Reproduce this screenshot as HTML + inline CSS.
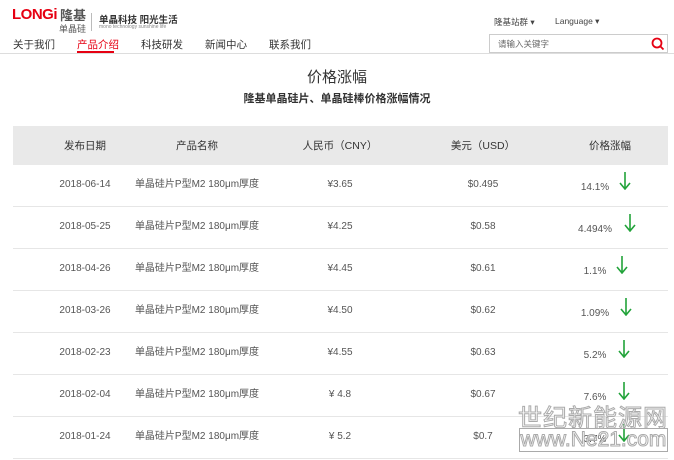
<!DOCTYPE html>
<html><head><meta charset="utf-8"><style>
*{margin:0;padding:0;box-sizing:border-box}
body{width:674px;height:456px;overflow:hidden;background:#fff;font-family:"Liberation Sans","Noto Sans CJK SC",sans-serif;color:#333;position:relative}
.a{position:absolute;white-space:nowrap}
.row{position:absolute;left:13px;width:655px;height:42px;border-bottom:1px solid #e6e6e6;font-size:10px;color:#555}
.row span{position:absolute;top:0;line-height:40px;transform:translateX(-50%)}
.arr{position:absolute;width:12px;height:18px}
</style></head><body>
<div class="a" style="left:12px;top:6px;font-size:15px;font-weight:bold;color:#e60012;letter-spacing:-0.5px">LONGi</div>
<div class="a" style="left:60px;top:5px;font-size:13px;font-weight:bold;color:#555">隆基</div>
<div class="a" style="left:59px;top:22px;font-size:9px;color:#555">单晶硅</div>
<div class="a" style="left:91px;top:13px;width:1px;height:18px;background:#bbb"></div>
<div class="a" style="left:99px;top:12px;font-size:9.5px;font-weight:bold;color:#333">单晶科技 阳光生活</div>
<div class="a" style="left:99px;top:24px;font-size:5px;color:#888">mono technology sunshine life</div>
<div class="a" style="left:13px;top:37px;font-size:10.5px;color:#333">关于我们</div>
<div class="a" style="left:77px;top:37px;font-size:10.5px;color:#e60012">产品介绍</div>
<div class="a" style="left:77px;top:51px;width:37px;height:2px;background:#e60012"></div>
<div class="a" style="left:141px;top:37px;font-size:10.5px">科技研发</div>
<div class="a" style="left:205px;top:37px;font-size:10.5px">新闻中心</div>
<div class="a" style="left:269px;top:37px;font-size:10.5px">联系我们</div>
<div class="a" style="left:0;top:53px;width:674px;height:1px;background:#ddd"></div>
<div class="a" style="left:494px;top:16px;font-size:8.5px;color:#444">隆基站群 ▾</div>
<div class="a" style="left:555px;top:16px;font-size:8.5px;color:#444">Language ▾</div>
<div class="a" style="left:489px;top:34px;width:179px;height:19px;border:1px solid #ccc"></div>
<div class="a" style="left:498px;top:38px;font-size:8.5px;color:#666">请输入关键字</div>
<svg class="a" style="left:651px;top:37px" width="14" height="14" viewBox="0 0 14 14"><circle cx="6" cy="6" r="4.5" fill="none" stroke="#e60012" stroke-width="1.8"/><path d="M9 9l3.5 3.5" stroke="#e60012" stroke-width="1.8"/></svg>
<div class="a" style="left:0;width:674px;top:66px;text-align:center;font-size:15px;color:#333">价格涨幅</div>
<div class="a" style="left:0;width:674px;top:90px;text-align:center;font-size:11px;color:#333;font-weight:bold">隆基单晶硅片、单晶硅棒价格涨幅情况</div>
<div class="a" style="left:13px;top:126px;width:655px;height:39px;background:#e9e9e9;font-size:10.5px;color:#333">
<span class="a" style="left:72px;top:12px;transform:translateX(-50%)">发布日期</span>
<span class="a" style="left:184px;top:12px;transform:translateX(-50%)">产品名称</span>
<span class="a" style="left:327px;top:12px;transform:translateX(-50%)">人民币（CNY）</span>
<span class="a" style="left:470px;top:12px;transform:translateX(-50%)">美元（USD）</span>
<span class="a" style="left:597px;top:12px;transform:translateX(-50%)">价格涨幅</span>
</div>
<div class="row" style="top:165px"><span style="left:72px">2018-06-14</span><span style="left:184px">单晶硅片P型M2 180μm厚度</span><span style="left:327px">¥3.65</span><span style="left:470px">$0.495</span><span style="left:582px;top:3px">14.1%</span></div>
<div class="row" style="top:207px"><span style="left:72px">2018-05-25</span><span style="left:184px">单晶硅片P型M2 180μm厚度</span><span style="left:327px">¥4.25</span><span style="left:470px">$0.58</span><span style="left:582px;top:3px">4.494%</span></div>
<div class="row" style="top:249px"><span style="left:72px">2018-04-26</span><span style="left:184px">单晶硅片P型M2 180μm厚度</span><span style="left:327px">¥4.45</span><span style="left:470px">$0.61</span><span style="left:582px;top:3px">1.1%</span></div>
<div class="row" style="top:291px"><span style="left:72px">2018-03-26</span><span style="left:184px">单晶硅片P型M2 180μm厚度</span><span style="left:327px">¥4.50</span><span style="left:470px">$0.62</span><span style="left:582px;top:3px">1.09%</span></div>
<div class="row" style="top:333px"><span style="left:72px">2018-02-23</span><span style="left:184px">单晶硅片P型M2 180μm厚度</span><span style="left:327px">¥4.55</span><span style="left:470px">$0.63</span><span style="left:582px;top:3px">5.2%</span></div>
<div class="row" style="top:375px"><span style="left:72px">2018-02-04</span><span style="left:184px">单晶硅片P型M2 180μm厚度</span><span style="left:327px">¥ 4.8</span><span style="left:470px">$0.67</span><span style="left:582px;top:3px">7.6%</span></div>
<div class="row" style="top:417px"><span style="left:72px">2018-01-24</span><span style="left:184px">单晶硅片P型M2 180μm厚度</span><span style="left:327px">¥ 5.2</span><span style="left:470px">$0.7</span><span style="left:582px;top:3px">3.7%</span></div>
<svg width="0" height="0" style="position:absolute"><defs><g id="ar"><path d="M6 0v16M1 11l5 6 5-6" fill="none" stroke="#22a33a" stroke-width="1.6"/></g></defs></svg>
<svg class="arr" style="left:619px;top:172px" viewBox="0 0 12 18"><use href="#ar"/></svg>
<svg class="arr" style="left:624px;top:214px" viewBox="0 0 12 18"><use href="#ar"/></svg>
<svg class="arr" style="left:616px;top:256px" viewBox="0 0 12 18"><use href="#ar"/></svg>
<svg class="arr" style="left:620px;top:298px" viewBox="0 0 12 18"><use href="#ar"/></svg>
<svg class="arr" style="left:618px;top:340px" viewBox="0 0 12 18"><use href="#ar"/></svg>
<svg class="arr" style="left:618px;top:382px" viewBox="0 0 12 18"><use href="#ar"/></svg>
<svg class="arr" style="left:618px;top:424px" viewBox="0 0 12 18"><use href="#ar"/></svg>
<div class="a" style="left:518px;top:398px;font-size:24px;color:rgba(255,255,255,0.6);-webkit-text-stroke:1px #aaa;letter-spacing:1px">世纪新能源网</div>
<div class="a" style="left:519px;top:428px;width:149px;height:24px;border:1px solid #aaa;font-size:21px;line-height:22px;color:rgba(255,255,255,0.6);-webkit-text-stroke:1px #aaa;text-align:center">www.Ne21.com</div>
</body></html>
